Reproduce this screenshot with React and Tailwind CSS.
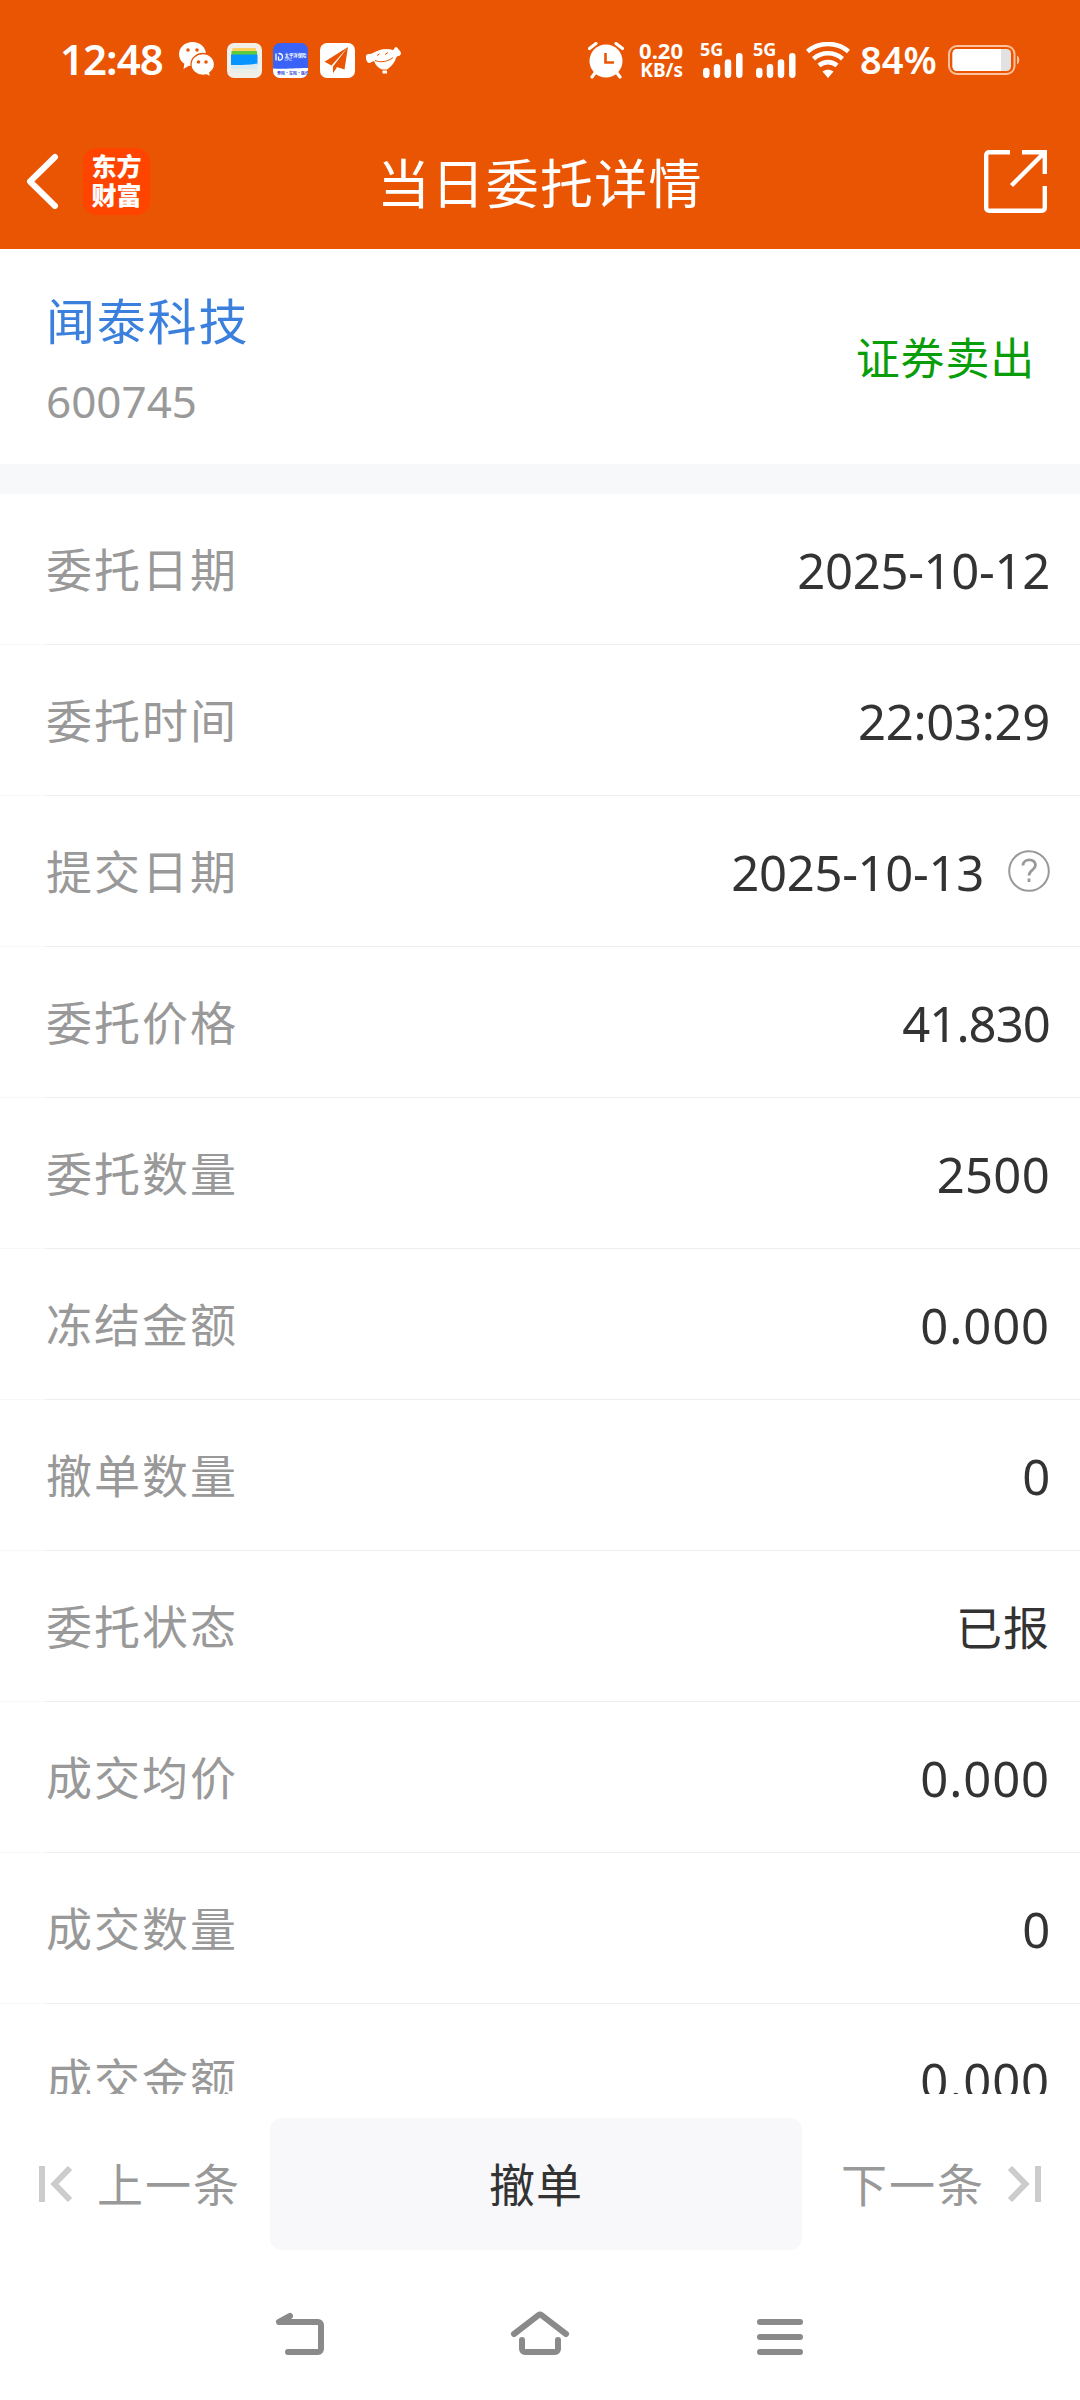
const rows = [
  { label: '委托日期', value: '2025-10-12' },
  { label: '委托时间', value: '22:03:29' },
  { label: '提交日期', value: '2025-10-13', help: true },
  { label: '委托价格', value: '41.830', spacing: 'tracking-[-0.900px]' },
  { label: '委托数量', value: '2500', spacing: 'tracking-[0.300px]' },
  { label: '冻结金额', value: '0.000', spacing: 'tracking-[0.900px]' },
  { label: '撤单数量', value: '0' },
  { label: '委托状态', value: '已报' },
  { label: '成交均价', value: '0.000', spacing: 'tracking-[0.900px]' },
  { label: '成交数量', value: '0' },
  { label: '成交金额', value: '0.000', spacing: 'tracking-[0.900px]' },
];

function WechatIcon() {
  return (
    <svg width="36" height="36" viewBox="0 0 36 36" className="shrink-0">
      <path d="M13.500 0C6 0 0 5.400 0 12.200c0 4 2 7.300 5.300 9.600L4.500 27l5.400-3.200c1.200.3 2.400.5 3.600.5C21 24.300 27 19 27 12.200S21 0 13.500 0z" fill="#fff" />
      <path d="M24 11.500c-6.600 0-12 4.900-12 11s5.400 11 12 11c1.300 0 2.500-.2 3.700-.5L31.500 35l-.7-4.200c2.800-2 4.700-5 4.700-8.300 0-6.100-5-11-11.500-11z" fill="#fff" stroke="#ea5504" strokeWidth="1.300" />
      <circle cx="9" cy="8" r="1.800" fill="#ea5504" />
      <circle cx="18" cy="8" r="1.800" fill="#ea5504" />
      <circle cx="19.500" cy="20" r="1.800" fill="#ea5504" />
      <circle cx="27" cy="20" r="1.800" fill="#ea5504" />
    </svg>
  );
}

function WalletIcon() {
  return (
    <svg width="35" height="35" viewBox="0 0 35 35" className="shrink-0">
      <rect width="35" height="35" rx="7" fill="#f1efe8" />
      <path d="M5.500 5h23.500v6H5z" fill="#ffd15c" />
      <path d="M4.500 8h25.500v5H4.500z" fill="#5fcb3a" />
      <path d="M4 11.500h26.500V22L4 24z" fill="#0894ff" />
      <path d="M4 22c8 0 16 .3 26.500-1.500V30H4z" fill="#d9ebf0" />
      <path d="M4 26h26.500v4H4z" fill="#eaeee9" />
    </svg>
  );
}

function InsuranceIcon() {
  return (
    <svg width="35" height="35" viewBox="0 0 35 35" className="shrink-0">
      <rect width="35" height="35" rx="7" fill="#3b62f6" />
      <path d="M0 25.500c10 1 20-.5 35-.5v3a7 7 0 0 1-7 7H7a7 7 0 0 1-7-7z" fill="#fff" />
      <path d="M3 10.500v7M5.500 17.200c3 0 4-1.500 4-3.500s-1-3.200-4-3.200M5.500 13.500v3.700" fill="none" stroke="#fff" strokeWidth="1.300" />
      <text x="11.500" y="13.600" fontSize="4.400" fontWeight="700" fill="#fff" className="font-['Noto_Sans_CJK_SC',sans-serif]">太平洋保险</text>
      <text x="11.500" y="18" fontSize="3.200" fill="#fff" className="font-['Liberation_Sans',sans-serif]">CPIC</text>
      <text x="4" y="31.500" fontSize="4" fontWeight="700" fill="#3550d8" className="font-['Noto_Sans_CJK_SC',sans-serif]">寿险·车险·医疗</text>
    </svg>
  );
}

function PlaneIcon() {
  return (
    <svg width="35" height="35" viewBox="0 0 35 35" className="shrink-0">
      <rect width="35" height="35" rx="7" fill="#fff" />
      <path d="M28 4 4.500 18.800l7 3.800zM28 4 13 23.500v6.800l3.500-5.300zM28 4 17 24l7.500 2.500z" fill="#ea5504" />
    </svg>
  );
}

function JdIcon() {
  return (
    <svg width="36" height="27" viewBox="0 0 36 27" className="shrink-0">
      <path d="M1 7.500c1.500-1 3.500 0 6-1.500C12 2.500 20 .5 27 3c1.500-.5 1-2.500 3-3 1.500 0 1.500 1.500 3.500 3.500C36 5.500 35 9 32.500 9c-1.500.2-2 1-2.700 2.500-1.300 4.500-5 8.500-8.800 11h-5c-4-2-7-4.500-7.500-8-1.500-.5-2.500.5-4.500 1.500-2 .5-3-1-4-4-.5-2-.5-3.500 1-4.500z" fill="#fff" />
      <path d="M9 13.500c6 2.500 13 1 18-3M11 8.500l2.500-1.500M19 7.500l3-2" fill="none" stroke="#ea5504" strokeWidth="1" />
      <rect x="16.500" y="23.500" width="4.500" height="3" fill="#fff" />
    </svg>
  );
}

function AlarmIcon() {
  return (
    <svg width="36" height="37" viewBox="0 0 36 37" className="shrink-0">
      <circle cx="18" cy="19" r="16.500" fill="#fff" />
      <path d="M1.500 6.500 8 1.500M34.500 6.500 28 1.500M7 31l-3 4M29 31l3 4" stroke="#fff" strokeWidth="3.200" strokeLinecap="round" />
      <path d="M17.500 11v9.500H26" fill="none" stroke="#ea5504" strokeWidth="2.600" />
    </svg>
  );
}

function Signal() {
  return (
    <div className="relative h-9 w-[43px] shrink-0">
      <span className="absolute -top-0.5 left-0 text-[18px] leading-[18px] font-bold">5G</span>
      <svg width="43" height="36" viewBox="0 0 43 36">
        <path d="M6.300 29v3.800M17 25.200v7.600M28 20.500v12.300M39.300 14.300v18.500" stroke="#fff" strokeWidth="6.500" strokeLinecap="round" />
      </svg>
    </div>
  );
}

function WifiIcon() {
  return (
    <svg width="44" height="36" viewBox="0 0 44 36" className="shrink-0">
      <path d="M1.500 9.500c11.500-10 29.500-10 41 0M7.500 16.700c8.500-7.200 20.500-7.200 29 0M13 23.500c5.300-4.500 12.700-4.500 18 0" fill="none" stroke="#fff" strokeWidth="4.600" />
      <path d="M16.500 29.500c3.500-2.500 7.500-2.500 11 0L22 36z" fill="#fff" />
    </svg>
  );
}

function BatteryIcon() {
  return (
    <svg width="72" height="30" viewBox="0 0 72 30" className="shrink-0">
      <rect x="1" y="1" width="65.500" height="28" rx="8" fill="none" stroke="#ffc09a" strokeWidth="2" />
      <rect x="4.500" y="4" width="58.500" height="22" rx="4.500" fill="#e2e2e2" />
      <path d="M9 4h44v22H9a4.500 4.500 0 0 1-4.500-4.500v-13A4.500 4.500 0 0 1 9 4z" fill="#fff" />
      <path d="M69 10.500c3 1 3 8 0 9z" fill="#ffc09a" />
    </svg>
  );
}

function StatusBar() {
  return (
    <div className="flex h-[120px] items-center pl-[60px] pr-[60px] font-['Noto_Sans',sans-serif] text-white">
      <span className="mb-0.5 w-[119px] text-[42px] leading-none font-semibold tracking-[-1px]">12:48</span>
      <div className="flex items-center gap-[11.500px]">
        <WechatIcon />
        <WalletIcon />
        <InsuranceIcon />
        <PlaneIcon />
        <JdIcon />
      </div>
      <div className="ml-auto flex items-center">
        <AlarmIcon />
        <div className="ml-3 flex w-[47px] flex-col items-end font-bold">
          <span className="text-[22px] leading-[20px]">0.20</span>
          <span className="text-[19px] leading-[20px]">KB/s</span>
        </div>
        <div className="ml-[17px] flex gap-[10px]">
          <Signal />
          <Signal />
        </div>
        <div className="ml-[10px]"><WifiIcon /></div>
        <span className="mb-0.5 ml-[10px] w-[88px] text-[38px] leading-none font-semibold">84%</span>
        <BatteryIcon />
      </div>
    </div>
  );
}

function TitleBar() {
  return (
    <div className="grid h-[129px] grid-cols-[1fr_auto_1fr] items-start text-white">
      <div className="flex items-start pl-[25px] pt-7">
        <svg width="34" height="56" viewBox="0 0 34 56" className="mt-[5px]">
          <path d="M30 4 5 28.500 30 53" fill="none" stroke="#fff" strokeWidth="6" strokeLinecap="round" strokeLinejoin="round" />
        </svg>
        <div className="ml-6 flex h-[67px] w-[67px] flex-col items-center justify-center rounded-[14px] bg-[#ff4400] pb-0.5 text-[25px] leading-[29px] font-black">
          <span>东方</span>
          <span>财富</span>
        </div>
      </div>
      <h1 className="mt-[34px] text-[53px] leading-[60px] tracking-[1.300px]">当日委托详情</h1>
      <svg width="63" height="63" viewBox="0 0 63 63" className="mt-[30px] mr-[33px] justify-self-end">
        <path d="M26 2.200H5a2.800 2.800 0 0 0-2.800 2.800v53A2.800 2.800 0 0 0 5 60.800h53a2.800 2.800 0 0 0 2.800-2.800V36M38 2.200h22.800V24M60 3 27.500 35.500" fill="none" stroke="#fff" strokeWidth="4.400" />
      </svg>
    </div>
  );
}

function StockInfo() {
  return (
    <div className="flex h-[215px] items-center justify-between pl-[46px] pr-[45px]">
      <div className="pt-2">
        <div className="text-[49px] leading-[80px] tracking-[1.800px] text-[#3a80dc]">闻泰科技</div>
        <div className="font-['Noto_Sans',sans-serif] text-[44px] leading-[80px] text-[#999]">600745</div>
      </div>
      <div className="mt-[3px] text-[44px] tracking-[0.800px] text-[#099e09]">证券卖出</div>
    </div>
  );
}

function HelpIcon() {
  return (
    <svg width="42" height="42" viewBox="0 0 42 42" className="ml-6 shrink-0">
      <circle cx="21" cy="21" r="19.800" fill="none" stroke="#999" strokeWidth="2" />
      <path d="M15 15.500c0-7.500 12.500-7.500 12.500-.5 0 5-6.500 5-6.500 10.500M21 28.500v3.500" fill="none" stroke="#999" strokeWidth="2.800" />
    </svg>
  );
}

function Row({ label, value, help, spacing = 'tracking-[-0.300px]' }) {
  const numeric = /^\d/.test(value);
  return (
    <div className="shrink-0">
      <div className="flex h-[150px] items-center justify-between pl-[46px] pr-[30px]">
        <span className="pt-px text-[46px] tracking-[2px] text-[#999]">{label}</span>
        <div className="flex items-center text-[#333]">
          {numeric ? (
            <span className={`pt-[3px] font-['Noto_Sans',sans-serif] text-[49px] ${spacing}`}>{value}</span>
          ) : (
            <span className="pt-0.5 text-[46px] tracking-[1px]">{value}</span>
          )}
          {help && <HelpIcon />}
        </div>
      </div>
      <div className="flex h-px bg-[#eee]">
        <div className="w-[45px] bg-[#f8f8f8]" />
      </div>
    </div>
  );
}

function ActionBar() {
  return (
    <div className="flex h-[180px] items-start bg-white px-[39px] pt-6">
      <button className="flex h-[132px] w-[231px] items-center text-[46px] tracking-[2px] text-[#999]">
        <svg width="34" height="36" viewBox="0 0 34 36" className="mr-6">
          <path d="M3 0v36M31 2 15.500 18 31 34" fill="none" stroke="#ccc" strokeWidth="6" />
        </svg>
        上一条
      </button>
      <button className="h-[132px] w-[532px] rounded-xl bg-[#f8f8fa] text-[46px] tracking-[1px] text-[#333]">撤单</button>
      <button className="flex h-[132px] flex-1 items-center justify-end text-[46px] tracking-[2px] text-[#999]">
        下一条
        <svg width="34" height="36" viewBox="0 0 34 36" className="ml-[22px]">
          <path d="M31 0v36M3 2l15.500 16L3 34" fill="none" stroke="#ccc" strokeWidth="6" />
        </svg>
      </button>
    </div>
  );
}

function SystemNav() {
  return (
    <div className="flex h-[126px] items-start justify-center gap-[180px] pt-[37px]">
      <svg width="60" height="46" viewBox="0 0 60 46" fill="none" stroke="#8a8a8a" strokeWidth="6" strokeLinecap="round" strokeLinejoin="round">
        <path d="M20 5 9 11h39a3 3 0 0 1 3 3v24a3 3 0 0 1-3 3H18" />
      </svg>
      <svg width="60" height="46" viewBox="0 0 60 46" fill="none" stroke="#8a8a8a" strokeWidth="6" strokeLinecap="round" strokeLinejoin="round">
        <path d="M4 23 28.500 4.200a2.500 2.500 0 0 1 3 0L56 23M12 29v9a3 3 0 0 0 3 3h30a3 3 0 0 0 3-3v-9" />
      </svg>
      <svg width="60" height="46" viewBox="0 0 60 46" fill="none" stroke="#8a8a8a" strokeWidth="6" strokeLinecap="round">
        <path d="M10 11h40M10 26h40M10 41h40" />
      </svg>
    </div>
  );
}

export default function App() {
  return (
    <div className="flex h-[2400px] w-[1080px] flex-col overflow-hidden bg-white font-['Lato','Noto_Sans_CJK_SC',sans-serif]">
      <header className="h-[249px] shrink-0 bg-[#ea5504]">
        <StatusBar />
        <TitleBar />
      </header>
      <StockInfo />
      <div className="h-[30px] shrink-0 bg-[#f6f8fa]" />
      <main className="flex h-[1600px] shrink-0 flex-col overflow-hidden">
        {rows.map((row) => (
          <Row key={row.label} {...row} />
        ))}
      </main>
      <ActionBar />
      <SystemNav />
    </div>
  );
}
